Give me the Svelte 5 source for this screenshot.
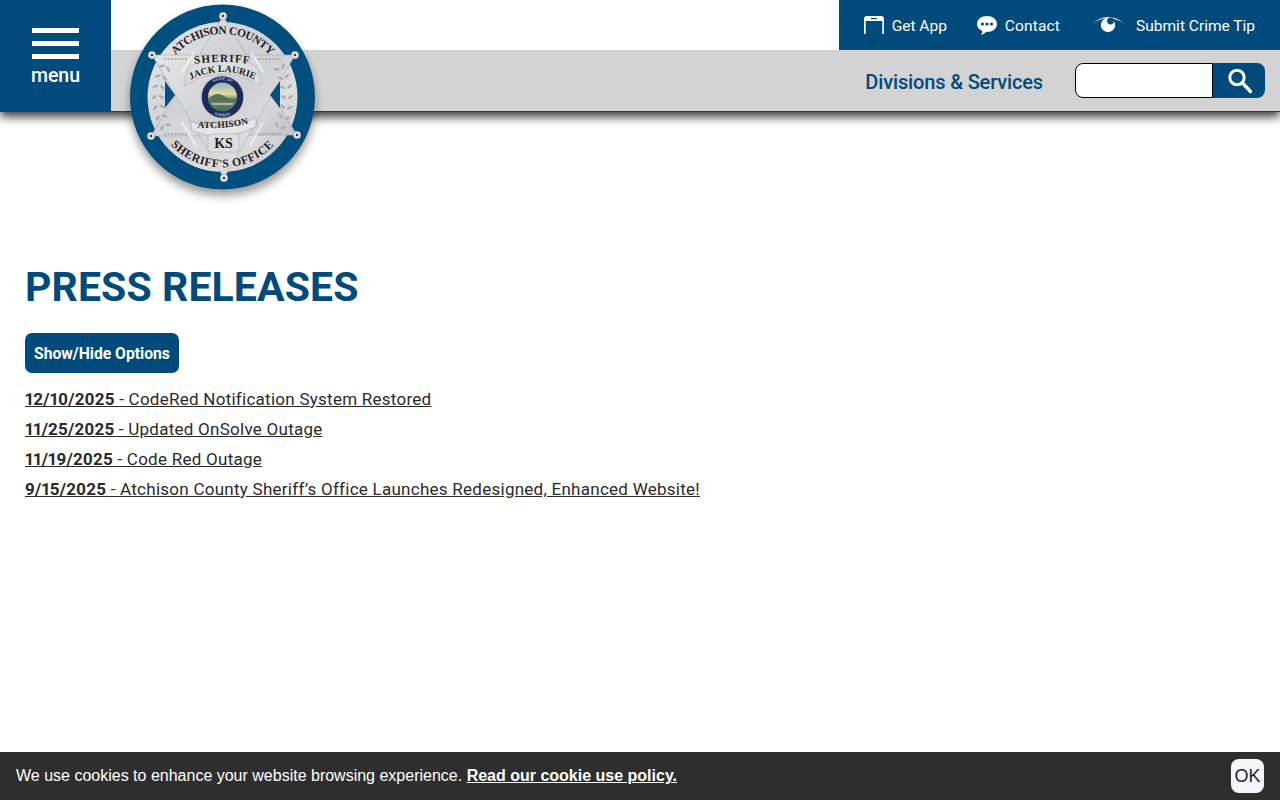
<script>
  const releases = [
    { date: '12/10/2025', title: 'CodeRed Notification System Restored' },
    { date: '11/25/2025', title: 'Updated OnSolve Outage' },
    { date: '11/19/2025', title: 'Code Red Outage' },
    { date: '9/15/2025', title: 'Atchison County Sheriff’s Office Launches Redesigned, Enhanced Website!' }
  ];

  // star tips on the badge
  const tips = [
    [103, 16], [32, 55], [175, 55], [31, 136], [177, 135], [104, 178]
  ];

  // wreath leaves running up the left and right bands
  const leaves = [];
  for (let i = 0; i < 7; i++) {
    const a = (-27 + i * 9) * Math.PI / 180;
    for (const s of [-1, 1]) {
      for (const r of [61, 68]) {
        leaves.push({
          x: 102.5 + s * r * Math.cos(a),
          y: 97 + r * Math.sin(a),
          rot: s * (i * 9 - 27) + (r === 61 ? 35 : -35)
        });
      }
    }
  }
</script>

<header class="site-header">
  <button class="menu-btn">
    <span class="bars"><i></i><i></i><i></i></span>
    <span class="menu-label">menu</span>
  </button>

  <div class="header-main">
    <div class="top-row">
      <nav class="top-links">
        <a href="#app" class="top-link app">
          <svg width="20" height="18" viewBox="0 0 20 18">
            <path d="M0 18V3Q0 0 3 0h14Q20 0 20 3V18h-1.700V5H1.700v13z" fill="#fff" />
            <rect x="7" y="2" width="6" height="1.200" fill="#004b7c" />
          </svg>
          <span>Get App</span>
        </a>
        <a href="#app" class="top-link contact">
          <svg width="20" height="19" viewBox="0 0 20 19">
            <path d="M10 0c5.600 0 10 3.500 10 8s-4.400 8-10 8H9c-1.300 1.300-3 2.400-5 3 .8-1 1.300-2.200 1.300-3.900C2.100 13.700 0 11 0 8c0-4.500 4.400-8 10-8z" fill="#fff" />
            <circle cx="5.500" cy="8" r="1.600" fill="#004b7c" />
            <circle cx="10" cy="8" r="1.600" fill="#004b7c" />
            <circle cx="14.500" cy="8" r="1.600" fill="#004b7c" />
          </svg>
          <span>Contact</span>
        </a>
        <a href="#app" class="top-link tip">
          <svg width="32" height="18" viewBox="0 0 32 18">
            <path d="M0 8Q8 1.200 16 1T32 7Q24 2.400 16 2.200T0 8z" fill="#fff" />
            <circle cx="16" cy="9" r="7.200" fill="#fff" />
            <circle cx="18.500" cy="5" r="3.400" fill="#004b7c" />
          </svg>
          <span>Submit Crime Tip</span>
        </a>
      </nav>
    </div>
    <div class="sub-row">
      <a href="#app" class="divisions">Divisions &amp; Services</a>
      <form class="search" onsubmit={(e) => e.preventDefault()}>
        <input type="text" aria-label="Search" />
        <button aria-label="Search">
          <svg width="26" height="26" viewBox="0 0 26 26">
            <circle cx="9" cy="9.500" r="7.200" fill="none" stroke="#fff" stroke-width="3" />
            <path d="M14.500 15l8 8.500" stroke="#fff" stroke-width="3.400" stroke-linecap="round" />
          </svg>
        </button>
      </form>
    </div>
  </div>

  <svg class="badge" width="210" height="210" viewBox="0 0 210 210">
    <defs>
      <linearGradient id="silver" x1="0" y1="0" x2="1" y2="1">
        <stop offset="0" stop-color="#e6e6e8" />
        <stop offset="0.45" stop-color="#d0d1d4" />
        <stop offset="0.7" stop-color="#dedee0" />
        <stop offset="1" stop-color="#c0c1c4" />
      </linearGradient>
      <linearGradient id="land" x1="0" y1="0" x2="0" y2="1">
        <stop offset="0" stop-color="#8fb2c4" />
        <stop offset="0.4" stop-color="#e8dc9a" />
        <stop offset="0.55" stop-color="#7d8f6c" />
        <stop offset="1" stop-color="#3e6b52" />
      </linearGradient>
      <filter id="drop" x="-20%" y="-20%" width="140%" height="140%">
        <feDropShadow dx="0" dy="6" stdDeviation="5" flood-color="#000" flood-opacity="0.4" />
      </filter>
      <path id="arc-top" d="M 39.500 97 A 63 63 0 0 1 165.500 97" />
      <path id="arc-bottom" d="M 32 97 A 70.500 70.500 0 0 0 173 97" />
      <path id="arc-sheriff" d="M 60 66.400 Q 102.500 57.600 145 66.400" />
      <path id="arc-jack" d="M 60 85.700 Q 102.500 58.300 145 85.700" />
      <path id="arc-atch" d="M 70 127 Q 103 131 136 122" />
      <path id="arc-seal-top" d="M 85.500 97 A 17 17 0 0 1 119.500 97" />
      <path id="arc-seal-bottom" d="M 83 97 A 19.500 19.500 0 0 0 122 97" />
    </defs>

    <circle cx="102.500" cy="97" r="92.500" fill="#05507f" filter="url(#drop)" />
    <circle cx="102.500" cy="97" r="75" fill="url(#silver)" />
    <polygon points="103,16 177,135 31,136" fill="url(#silver)" stroke="#a9aaad" stroke-width="0.600" />
    <polygon points="32,55 175,55 104,178" fill="url(#silver)" stroke="#a9aaad" stroke-width="0.600" />

    <!-- blue notches either side of the star -->
    <polygon points="55,95 45,81 45,108" fill="#05507f" />
    <polygon points="150,95 160,81 160,108" fill="#05507f" />

    {#each leaves as l}
      <ellipse cx={l.x} cy={l.y} rx="3" ry="1.200" fill="#a9aaad" transform="rotate({l.rot} {l.x} {l.y})" />
    {/each}

    <path d="M 44 59 L 68 59 M 138 59 L 162 59 M 44 134 L 68 134 M 138 134 L 162 134" stroke="#9c9da0" stroke-width="1.500" stroke-dasharray="2 1.500" />
    <path d="M 62 72 L 74 52 M 143 72 L 131 52 M 62 122 L 76 146 M 143 122 L 130 146" stroke="#f4f4f5" stroke-width="2" opacity="0.8" />

    <!-- ribbons -->
    <path d="M 68 68 Q 103 44 138 68 L 141 86 Q 103 62 64 86 z" fill="#dcdcde" stroke="#a4a5a8" stroke-width="0.500" />
    <path d="M 70 121 Q 103 135 136 117 L 136 127 Q 103 143 72 131 z" fill="#e6e6e8" stroke="#8e8f92" stroke-width="0.500" />
    <rect x="88" y="134" width="31" height="18" rx="3" fill="#dedee0" stroke="#a4a5a8" stroke-width="0.500" />

    {#each tips as t}
      <circle cx={t[0]} cy={t[1]} r="3.800" fill="#e9e9eb" stroke="#8e8f92" stroke-width="0.500" />
      <circle cx={t[0]} cy={t[1]} r="1.300" fill="#3d3d40" />
    {/each}

    <!-- state seal -->
    <circle cx="102.500" cy="97" r="22" fill="#c9cacd" />
    <circle cx="102.500" cy="97" r="20.800" fill="#1d2a5e" />
    <circle cx="102.500" cy="97" r="14.500" fill="url(#land)" />
    <path d="M 89 99 Q 96 91 104 96 T 116 98 L 116 102 L 89 102 z" fill="#56705a" />
    <path d="M 92 104 L 113 104" stroke="#d8dcc0" stroke-width="1.200" />
    <text class="seal-text"><textPath href="#arc-seal-top" startOffset="50%" text-anchor="middle">STATE OF</textPath></text>
    <text class="seal-text"><textPath href="#arc-seal-bottom" startOffset="50%" text-anchor="middle">KANSAS</textPath></text>

    <text class="badge-text county"><textPath href="#arc-top" startOffset="50%" text-anchor="middle">ATCHISON COUNTY</textPath></text>
    <text class="badge-text office"><textPath href="#arc-bottom" startOffset="50%" text-anchor="middle">SHERIFF'S OFFICE</textPath></text>
    <text class="badge-text sheriff"><textPath href="#arc-sheriff" startOffset="50%" text-anchor="middle">SHERIFF</textPath></text>
    <text class="badge-text jack"><textPath href="#arc-jack" startOffset="50%" text-anchor="middle">JACK LAURIE</textPath></text>
    <text class="badge-text atch"><textPath href="#arc-atch" startOffset="50%" text-anchor="middle">ATCHISON</textPath></text>
    <text class="badge-text ks" x="103.500" y="148" text-anchor="middle">KS</text>
  </svg>
</header>

<main class="content">
  <h1>PRESS RELEASES</h1>
  <button class="options-btn">Show/Hide Options</button>
  <ul class="release-list">
    {#each releases as r}
      <li><a href="#app"><strong>{r.date}</strong> - {r.title}</a></li>
    {/each}
  </ul>
</main>

<div class="cookie-bar">
  <p>We use cookies to enhance your website browsing experience. <a href="#app">Read our cookie use policy.</a></p>
  <button class="cookie-ok">OK</button>
</div>

<style>
  :global(body) {
    background: #fff;
    font-family: Roboto, "Liberation Sans", sans-serif;
    color: #222;
  }

  .site-header {
    position: relative;
    display: flex;
    height: 112px;
    box-shadow: 0 5px 9px rgba(0, 0, 0, 0.75);
  }

  .menu-btn {
    width: 111px;
    flex: none;
    border: 0;
    padding: 28px 0 0;
    background: #004b7c;
    color: #fff;
    display: flex;
    flex-direction: column;
    align-items: center;
    font-family: inherit;
  }

  .bars {
    display: flex;
    flex-direction: column;
    gap: 8px;
  }

  .bars i {
    display: block;
    width: 47px;
    height: 5px;
    background: #fff;
  }

  .menu-label {
    margin-top: 5px;
    font-size: 19.500px;
    line-height: 24px;
    font-weight: 500;
  }

  .header-main {
    flex: 1;
    display: flex;
    flex-direction: column;
  }

  .top-row {
    height: 50px;
    display: flex;
    justify-content: flex-end;
    background: #fff;
  }

  .top-links {
    display: flex;
    align-items: center;
    padding: 0 25px;
    background: #004b7c;
  }

  .top-link {
    display: flex;
    align-items: center;
    gap: 8px;
    color: #fff;
    text-decoration: none;
    font-size: 15.500px;
  }

  .top-link span {
    padding-top: 1px;
  }

  .top-link.app {
    margin-right: 30px;
  }

  .top-link.contact {
    margin-right: 32px;
    letter-spacing: 0.15px;
  }

  .top-link.tip {
    gap: 12px;
  }

  .sub-row {
    height: 62px;
    display: flex;
    justify-content: flex-end;
    align-items: center;
    gap: 32px;
    padding: 0 15px 0 0;
    box-sizing: border-box;
    background: #d3d3d3;
    border-bottom: 1px solid #004b7c;
  }

  .divisions {
    margin-top: 2px;
    color: #004b7c;
    text-decoration: none;
    font-size: 20px;
    font-weight: 500;
    letter-spacing: -0.15px;
  }

  .search {
    display: flex;
    height: 35px;
  }

  .search input {
    width: 138px;
    box-sizing: border-box;
    border: 1px solid #000;
    border-radius: 8px 0 0 8px;
    background: #fff;
    padding: 0 6px;
  }

  .search button {
    width: 52px;
    border: 0;
    border-radius: 0 8px 8px 0;
    background: #004b7c;
    padding: 0 0 0 4px;
    display: flex;
    align-items: center;
    justify-content: center;
  }

  .badge {
    position: absolute;
    left: 120px;
    top: 0;
  }

  .badge-text {
    font-family: "Liberation Serif", serif;
    font-weight: 700;
    fill: #1e1e22;
  }

  .county { font-size: 11.500px; letter-spacing: -0.5px; }
  .office { font-size: 11.700px; letter-spacing: 0.5px; }
  .sheriff { font-size: 11px; letter-spacing: 1.200px; }
  .jack { font-size: 9.800px; letter-spacing: -0.1px; }
  .atch { font-size: 9.500px; letter-spacing: 0.2px; }
  .ks { font-size: 14px; }

  .seal-text {
    font-family: "Liberation Sans", sans-serif;
    font-size: 4px;
    fill: #e4e6ee;
  }

  .content {
    padding: 0 25px;
  }

  h1 {
    margin: 150px 0 0;
    font-size: 41px;
    line-height: 50px;
    font-weight: 700;
    letter-spacing: 0.1px;
    color: #004b7c;
  }

  .options-btn {
    display: block;
    margin-top: 21px;
    height: 40px;
    width: 154px;
    padding: 0;
    border: 0;
    border-radius: 7px;
    background: #004b7c;
    color: #fff;
    font-family: inherit;
    font-size: 15.700px;
    font-weight: 700;
  }

  .release-list {
    list-style: none;
    margin: 11px 0 0;
    padding: 0;
  }

  .release-list li {
    height: 30px;
    line-height: 30px;
    font-size: 17px;
  }

  .release-list a {
    color: #2a2a2a;
    font-weight: 400;
    letter-spacing: 0.26px;
  }

  .release-list strong {
    font-weight: 700;
    letter-spacing: 0.15px;
    font-variant-numeric: proportional-nums;
  }

  .cookie-bar {
    position: fixed;
    left: 0;
    right: 0;
    bottom: 0;
    height: 48px;
    display: flex;
    align-items: center;
    justify-content: space-between;
    padding: 0 16px;
    box-sizing: border-box;
    background: #2e2e2e;
    color: #fff;
    font-family: "Liberation Sans", Arial, sans-serif;
    font-size: 16px;
  }

  .cookie-bar p {
    margin: 0;
  }

  .cookie-bar a {
    color: #fff;
    font-weight: 700;
  }

  .cookie-ok {
    width: 33px;
    height: 34px;
    padding: 0;
    border: 0;
    border-radius: 8px;
    background: #f5f7fa;
    color: #222;
    font-family: inherit;
    font-size: 18px;
  }
</style>
